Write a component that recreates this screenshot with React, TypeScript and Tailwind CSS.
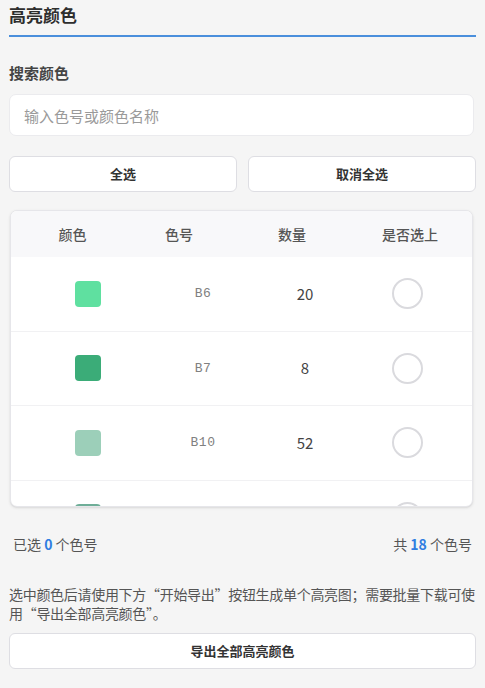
import React from "react";

type Row = { color: string; code: string; count: number };

const rows: Row[] = [
  { color: "#5fe0a0", code: "B6", count: 20 },
  { color: "#3bac78", code: "B7", count: 8 },
  { color: "#9ccfb9", code: "B10", count: 52 },
  { color: "#6fae98", code: "B11", count: 14 },
];

const App = () => {
  return (
    <div
      className="min-h-screen bg-[#f5f5f5] px-[9px] text-[#333]"
      style={{ fontFamily: '"Noto Sans CJK SC", "Noto Sans", sans-serif' }}
    >
      <div className="pt-[3px] pb-[8px] border-b-2 border-[#4a8fdc]">
        <h2 className="text-[17px] leading-[24px] font-bold text-[#2e2e2e]">高亮颜色</h2>
      </div>

      <p className="mt-[25px] text-[15px] leading-[22px] font-semibold text-[#444]">搜索颜色</p>

      <input
        placeholder="输入色号或颜色名称"
        className="mt-[10px] block w-[465px] h-[42px] rounded-[7px] border border-[#ebebee] bg-white px-[14px] text-[15px] text-[#333] placeholder:text-[#9a9a9a] outline-none"
      />

      <div className="mt-[20px] flex gap-[11px]">
        <button className="flex-1 h-[36px] rounded-[6px] border border-[#dedee3] bg-white text-[13px] font-bold text-[#333]">
          全选
        </button>
        <button className="flex-1 h-[36px] rounded-[6px] border border-[#dedee3] bg-white text-[13px] font-bold text-[#333]">
          取消全选
        </button>
      </div>

      <div className="mt-[18px] ml-[1px] w-[463px] h-[297px] overflow-hidden rounded-[7px] border border-[#e6e6ea] bg-white shadow-sm">
        <div className="grid grid-cols-[123px_90px_136px_100px] h-[46px] items-center bg-[#f8f8fa] text-[14px] font-medium text-[#555]">
          <span className="text-center">颜色</span>
          <span className="text-center">色号</span>
          <span className="text-center">数量</span>
          <span className="text-center">是否选上</span>
        </div>
        {rows.map((r) => (
          <div
            key={r.code}
            className="grid grid-cols-[154px_76px_128px_76px] h-[74.5px] items-center border-b border-[#f1f1f3]"
          >
            <div className="flex justify-center">
              <span className="w-[26px] h-[26px] rounded-[4px]" style={{ backgroundColor: r.color }} />
            </div>
            <span
              className="text-center text-[13px] tracking-[0.5px] text-[#808080]"
              style={{ fontFamily: '"Liberation Mono", monospace' }}
            >
              {r.code}
            </span>
            <span className="text-center text-[15px] text-[#444]">{r.count}</span>
            <div className="flex justify-center">
              <span className="w-[31px] h-[31px] rounded-full border-2 border-[#dadade]" />
            </div>
          </div>
        ))}
      </div>

      <div className="mt-[27px] flex justify-between px-[4px] text-[14px] leading-[20px] text-[#555]">
        <span>
          已选 <span className="font-bold text-[#2f7de1]">0</span> 个色号
        </span>
        <span>
          共 <span className="font-bold text-[#2f7de1]">18</span> 个色号
        </span>
      </div>

      <p className="mt-[31px] w-[470px] text-[14px] leading-[19px] tracking-[-0.3px] text-[#555]">
        选中颜色后请使用下方“开始导出”按钮生成单个高亮图；需要批量下载可使用“导出全部高亮颜色”。
      </p>

      <button className="mt-[10px] w-full h-[36px] rounded-[6px] border border-[#dedee3] bg-white text-[13px] font-bold text-[#333]">
        导出全部高亮颜色
      </button>
    </div>
  );
};

export default App;
